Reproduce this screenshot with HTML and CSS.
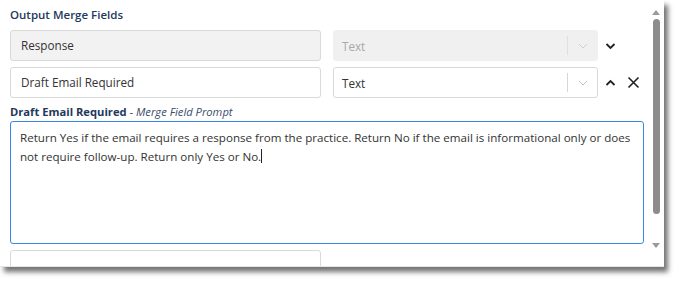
FILE: index.html
```html
<!DOCTYPE html>
<html>
<head>
<meta charset="utf-8">
<link rel="stylesheet" href="styles.css">
</head>
<body>
<div class="panel">
  <div class="content">
    <div class="section-title">Output Merge Fields</div>
    <div class="row">
      <div class="input disabled">Response</div>
      <div class="select disabled">
        <span class="select-value">Text</span>
        <span class="select-sep"></span>
        <span class="select-arrow"><svg width="10" height="6" viewBox="0 0 10 6"><path d="M1 1l4 4 4-4" fill="none" stroke="#cfcfcf" stroke-width="1"/></svg></span>
      </div>
      <div class="actions">
        <svg class="act" width="11" height="8" viewBox="0 0 11 8"><path d="M1.5 2l4 4 4-4" fill="none" stroke="#222" stroke-width="1.8"/></svg>
      </div>
    </div>
    <div class="row">
      <div class="input">Draft Email Required</div>
      <div class="select">
        <span class="select-value">Text</span>
        <span class="select-sep"></span>
        <span class="select-arrow"><svg width="10" height="6" viewBox="0 0 10 6"><path d="M1 1l4 4 4-4" fill="none" stroke="#c4c4c4" stroke-width="1"/></svg></span>
      </div>
      <div class="actions">
        <svg class="act" width="11" height="8" viewBox="0 0 11 8"><path d="M1.5 6l4-4 4 4" fill="none" stroke="#222" stroke-width="1.8"/></svg>
        <svg class="act close" width="13" height="13" viewBox="0 0 13 13"><path d="M1.5 1.5l10 10M11.5 1.5l-10 10" fill="none" stroke="#222" stroke-width="1.6"/></svg>
      </div>
    </div>
    <div class="prompt-label"><b>Draft Email Required</b> - <i>Merge Field Prompt</i></div>
    <div class="textarea">Return Yes if the email requires a response from the practice. Return No if the email is informational only or does not require follow-up. Return only Yes or No.<span class="caret"></span></div>
    <div class="row">
      <div class="input"></div>
    </div>
  </div>
  <div class="scrollbar">
    <svg width="8" height="6" viewBox="0 0 8 6"><path d="M0 6L4 1 8 6z" fill="#9a9a9a"/></svg>
    <div class="thumb"></div>
    <svg width="8" height="6" viewBox="0 0 8 6"><path d="M0 0L4 5 8 0z" fill="#9a9a9a"/></svg>
  </div>
</div>
</body>
</html>
```
FILE: styles.css
```css
* { box-sizing: border-box; }
html, body { margin: 0; padding: 0; background: #fff; }
body {
  font-family: "Open Sans", "Noto Sans", sans-serif;
  width: 679px;
  height: 283px;
  overflow: hidden;
}
.panel {
  width: 664px;
  height: 267px;
  background: #fff;
  display: flex;
  overflow: hidden;
  box-shadow: 4px 5px 5px rgba(0,0,0,0.55);
  border-bottom: 1px solid #e6e6e6;
}
.content {
  width: 644px;
  padding: 7px 0 0 10px;
  display: flex;
  flex-direction: column;
}
.section-title {
  font-size: 11.5px;
  font-weight: 600;
  color: #23395b;
  height: 16px;
  line-height: 16px;
  margin-bottom: 7px;
}
.row {
  display: flex;
  align-items: center;
  height: 31px;
  margin-bottom: 6px;
  flex-shrink: 0;
}
.input {
  width: 311px;
  height: 31px;
  border: 1px solid #d9d9d9;
  border-radius: 3px;
  padding: 0 10px;
  font-size: 11.7px;
  line-height: 29px;
  color: #333;
  background: #fff;
}
.input.disabled { background: #f2f2f2; }
.select {
  margin-left: 12px;
  width: 265px;
  height: 31px;
  border: 1px solid #d9d9d9;
  border-radius: 3px;
  display: flex;
  align-items: center;
  font-size: 11.7px;
  color: #333;
  background: #fff;
}
.select.disabled { background: #f0f0f0; border-color: #f0f0f0; color: #a8a8a8; }
.select-value { flex: 1; padding-left: 8px; }
.select-sep { width: 1px; height: 19px; background: #d6d6d6; }
.select.disabled .select-sep { background: #e0e0e0; }
.select-arrow { width: 29px; display: flex; justify-content: center; align-items: center; }
.actions { display: flex; align-items: center; padding-left: 7px; gap: 11px; }
.act { display: block; }
.prompt-label {
  font-size: 11.2px;
  color: #23395b;
  height: 16px;
  line-height: 16px;
  margin-top: 0;
  margin-bottom: 1px;
}
.prompt-label b { font-weight: 700; }
.prompt-label i { font-weight: 400; color: #3a4d6b; }
.textarea {
  width: 634px;
  height: 123px;
  border: 1px solid #3a86e8;
  border-radius: 3px;
  padding: 6px 4px 6px 9px;
  font-size: 11.6px;
  line-height: 19px;
  color: #333;
  margin-bottom: 6px;
  flex-shrink: 0;
}
.caret { display: inline-block; width: 1px; height: 14px; background: #222; vertical-align: -2px; }
.scrollbar {
  width: 20px;
  display: flex;
  flex-direction: column;
  align-items: center;
  padding: 9px 0 0 4px;
}
.scrollbar svg { display: block; }
.thumb {
  width: 7px;
  height: 195px;
  background: #8c8c8c;
  border-radius: 4px;
  margin: 4px 0 29px;
}
```
